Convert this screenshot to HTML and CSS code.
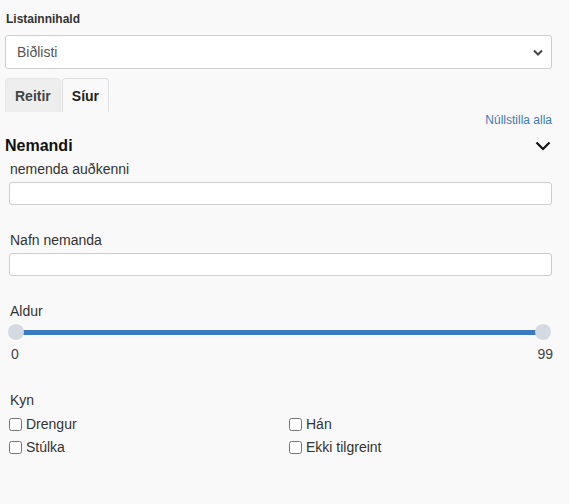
FILE: index.html
```html
<!DOCTYPE html>
<html lang="is">
<head>
  <meta charset="UTF-8">
  <title>Síur</title>
  <link rel="stylesheet" href="styles.css">
</head>
<body>
  <div class="panel">
    <div class="top-label">Listainnihald</div>
    <div class="select">
      <span>Biðlisti</span>
      <svg width="10" height="7" viewBox="0 0 10 7"><path d="M1 1.5 L5 5.5 L9 1.5" fill="none" stroke="#444" stroke-width="2"/></svg>
    </div>

    <div class="tabs">
      <div class="tab">Reitir</div>
      <div class="tab active">Síur</div>
    </div>

    <div class="reset"><a href="#">Núllstilla alla</a></div>

    <div class="group-head">
      <span>Nemandi</span>
      <svg width="16" height="10" viewBox="0 0 16 10"><path d="M1.5 1.5 L8 8 L14.5 1.5" fill="none" stroke="#111" stroke-width="2.2"/></svg>
    </div>

    <div class="section">
      <div class="field">
        <label>nemenda auðkenni</label>
        <input type="text">
      </div>
      <div class="field">
        <label>Nafn nemanda</label>
        <input type="text">
      </div>
      <div class="field range">
        <label>Aldur</label>
        <div class="slider">
          <span class="handle"></span>
          <span class="handle"></span>
        </div>
        <div class="range-values">
          <span>0</span>
          <span>99</span>
        </div>
      </div>
      <div class="field gender">
        <label>Kyn</label>
        <div class="checks">
          <label class="check"><input type="checkbox"> Drengur</label>
          <label class="check"><input type="checkbox"> Hán</label>
          <label class="check"><input type="checkbox"> Stúlka</label>
          <label class="check"><input type="checkbox"> Ekki tilgreint</label>
        </div>
      </div>
    </div>
  </div>
</body>
</html>
```

FILE: styles.css
```css
* { box-sizing: border-box; }
body {
  margin: 0;
  background-color: #f9f9f9;
  font-family: "Liberation Sans", Arial, sans-serif;
  font-size: 14px;
  color: #333;
}
.panel {
  width: 552px;
  padding: 12px 0 0 5px;
}
.top-label {
  font-size: 12px;
  font-weight: bold;
  line-height: 14px;
  padding-left: 1px;
  margin-bottom: 9px;
}
.select {
  display: flex;
  align-items: center;
  justify-content: space-between;
  height: 34px;
  padding: 0 8px 0 11px;
  background: #fff;
  border: 1px solid #ccc;
  border-radius: 3px;
  color: #555;
}
.tabs {
  display: flex;
  margin-top: 9px;
}
.tab {
  height: 34px;
  line-height: 34px;
  padding: 0 9px;
  font-weight: bold;
  color: #444;
  background: #eee;
  border: 1px solid #e6e6e6;
  border-bottom: none;
  border-radius: 4px 4px 0 0;
}
.tab.active {
  margin-left: 1px;
  background: #f9f9f9;
  border-color: #ddd;
  color: #222;
}
.reset {
  text-align: right;
  font-size: 12px;
  line-height: 16px;
}
.reset a {
  color: #3f7ab5;
  text-decoration: none;
}
.group-head {
  display: flex;
  align-items: center;
  justify-content: space-between;
  margin-top: 8px;
  height: 20px;
  font-size: 16px;
  font-weight: bold;
  color: #111;
}
.group-head svg {
  margin-right: 1px;
}
.section {
  padding-left: 4px;
  margin-top: 5px;
}
.field {
  margin-bottom: 27px;
}
.field > label {
  display: block;
  line-height: 16px;
  padding-left: 1px;
  margin-bottom: 5px;
}
.field input[type="text"] {
  display: block;
  width: 100%;
  height: 23px;
  margin: 0;
  background: #fff;
  border: 1px solid #ccc;
  border-radius: 3px;
}
.field.range {
  margin-bottom: 30px;
}
.slider {
  display: flex;
  justify-content: space-between;
  margin: 0 1px 0 -1px;
  height: 16px;
  background: linear-gradient(#3a7bbf, #3a7bbf) center / calc(100% - 16px) 5px no-repeat;
}
.handle {
  width: 16px;
  height: 16px;
  border-radius: 50%;
  background: #d4dae0;
}
.range-values {
  display: flex;
  justify-content: space-between;
  margin: 6px -1px 0 0;
  padding-left: 2px;
  line-height: 16px;
  color: #444;
}
.field.gender > label {
  margin-bottom: 8px;
}
.checks {
  display: grid;
  grid-template-columns: 280px 1fr;
  row-gap: 7px;
}
.check {
  display: flex;
  align-items: center;
  line-height: 16px;
}
.check input {
  width: 13px;
  height: 13px;
  margin: 0 4px 0 0;
}
```
